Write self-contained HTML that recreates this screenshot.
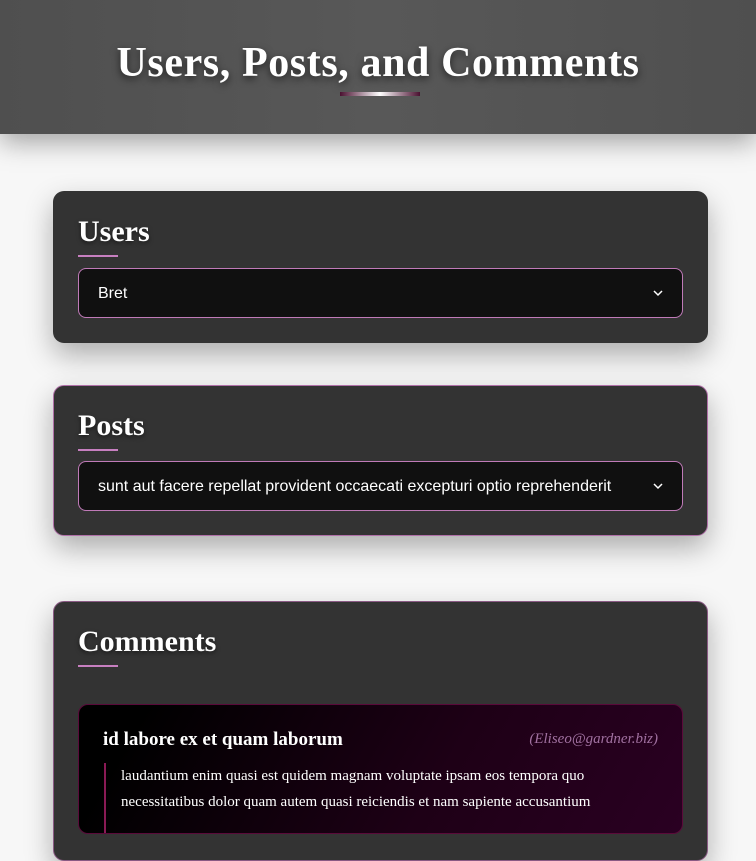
<!DOCTYPE html>
<html><head><meta charset="utf-8"><style>
*{box-sizing:border-box;margin:0;padding:0}
html,body{width:756px;height:803px;overflow:hidden;background:#f7f7f7;font-family:"Liberation Serif",serif}
header{position:absolute;left:0;top:0;width:756px;height:134px;background:linear-gradient(90deg,#4f4f4f,#585858 50%,#4f4f4f);box-shadow:0 8px 25px rgba(0,0,0,.35);text-align:center}
header h1{position:absolute;top:38px;left:0;right:0;font-size:42px;font-weight:bold;color:#fff;letter-spacing:0.6px;text-shadow:0 3px 8px rgba(0,0,0,.6);line-height:50px}
header .bar{position:absolute;left:340px;top:92px;width:80px;height:4px;background:linear-gradient(90deg,#4a1030,#fff 50%,#4a1030)}
.card{position:absolute;left:53px;width:655px;background:#333;border-radius:11px;box-shadow:0 12px 28px rgba(0,0,0,.3);padding:0 25px}
.card h2{position:absolute;left:25px;font-size:30px;font-weight:bold;color:#fff;text-shadow:0 2px 4px rgba(0,0,0,.5)}
.card .ul{position:absolute;left:25px;width:40px;height:2px;background:#c77fc0}
.sel{position:absolute;left:25px;width:605px;height:50px;background:#101010;border:1px solid #c07ab8;border-radius:8px;color:#fff;font-family:"Liberation Sans",sans-serif;font-size:16px;line-height:50px;padding-left:19px}
.sel svg{position:absolute;right:19px;top:21px}
.cm{position:absolute;left:25px;top:102px;width:605px;height:130px;border:1px solid #5a0a3a;border-radius:10px;background:linear-gradient(120deg,#000 10%,#1e0016 60%,#2a0022)}
</style></head><body>
<header><h1>Users, Posts, and Comments</h1><div class="bar"></div></header>

<div class="card" style="top:191px;height:152px">
<h2 style="top:24px">Users</h2><div class="ul" style="top:64px"></div>
<div class="sel" style="top:77px">Bret<svg width="10" height="7" viewBox="0 0 10 7"><path d="M1 1l4 4 4-4" stroke="#fff" stroke-width="1.5" fill="none"/></svg></div>
</div>

<div class="card" style="top:385px;height:151px;border:1px solid #b070a8">
<h2 style="top:23px;left:24px">Posts</h2><div class="ul" style="top:63px;left:24px"></div>
<div class="sel" style="top:75px;left:24px">sunt aut facere repellat provident occaecati excepturi optio reprehenderit<svg width="10" height="7" viewBox="0 0 10 7"><path d="M1 1l4 4 4-4" stroke="#fff" stroke-width="1.5" fill="none"/></svg></div>
</div>

<div class="card" style="top:601px;height:260px;border:1px solid #8a5a84">
<h2 style="top:23px;left:24px">Comments</h2><div class="ul" style="top:63px;left:24px"></div>
<div class="cm" style="left:24px">
<div style="position:absolute;left:24px;top:24px;font-size:19px;font-weight:bold;color:#fff">id labore ex et quam laborum</div>
<div style="position:absolute;right:24px;top:26px;font-size:15px;font-style:italic;color:#a070a0">(Eliseo@gardner.biz)</div>
<div style="position:absolute;left:25px;top:58px;width:2px;height:70px;background:#8a1a55"></div>
<div style="position:absolute;left:42px;top:58px;width:530px;font-size:15px;line-height:26px;color:#fff">laudantium enim quasi est quidem magnam voluptate ipsam eos tempora quo necessitatibus dolor quam autem quasi reiciendis et nam sapiente accusantium</div>
</div>
</div>
</body></html>
